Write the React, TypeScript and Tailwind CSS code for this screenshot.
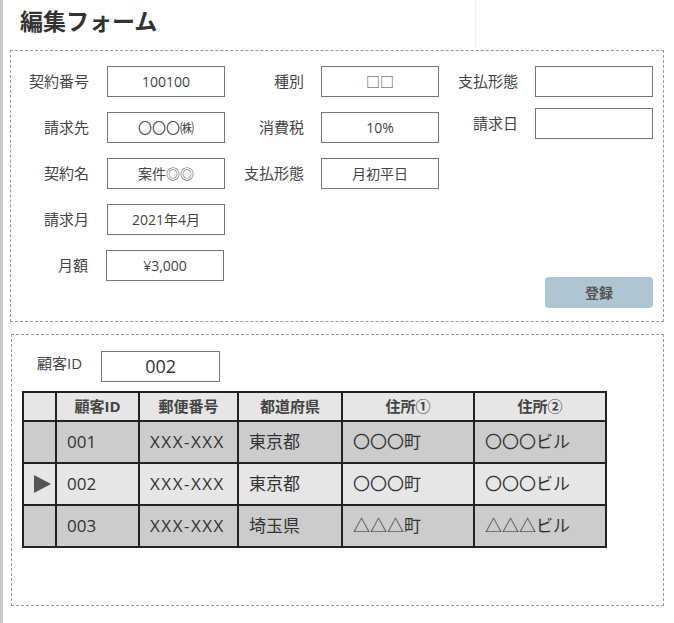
import React from "react";

const font = { fontFamily: '"Open Sans", "Noto Sans CJK JP", sans-serif' };

function Field({ label, value, labelW = "w-[79px]", gap = "ml-[17px]" }: { label: string; value: string; labelW?: string; gap?: string }) {
  return (
    <div className="flex items-center h-[31px]">
      <div className={`${labelW} text-right text-[15px] text-[#444] leading-none whitespace-nowrap`}>{label}</div>
      <div className={`${gap} w-[118px] h-[31px] border border-[#777] bg-white flex items-center justify-center text-[14px] text-[#444]`}>
        {value}
      </div>
    </div>
  );
}

const rows = [
  { id: "001", zip: "XXX-XXX", pref: "東京都", a1: "〇〇〇町", a2: "〇〇〇ビル", sel: false },
  { id: "002", zip: "XXX-XXX", pref: "東京都", a1: "〇〇〇町", a2: "〇〇〇ビル", sel: true },
  { id: "003", zip: "XXX-XXX", pref: "埼玉県", a1: "△△△町", a2: "△△△ビル", sel: false },
];

export default function App() {
  return (
    <div className="flex w-[674px] h-[623px] bg-white overflow-hidden" style={font}>
      <div className="w-[3px] bg-[#c8c8c8] shrink-0" />
      <div className="flex flex-col flex-1">
        <div className="flex h-[50px]">
          <div className="w-[473px] h-[47px] border-r border-[#f0f0f0] pl-[17px] pt-[4px]">
            <h1 className="text-[23px] font-bold text-[#333] leading-[34px]">編集フォーム</h1>
          </div>
        </div>
        <div className="ml-[7px] w-[654px] h-[272px] border border-dashed border-[#999] pt-[15px] pb-[13px] flex">
          <div className="flex flex-col gap-[15px] w-[214px]">
            <Field label="契約番号" value="100100" labelW="w-[78px]" gap="ml-[18px]" />
            <Field label="請求先" value="〇〇〇㈱" labelW="w-[78px]" gap="ml-[18px]" />
            <Field label="契約名" value="案件◎◎" labelW="w-[78px]" gap="ml-[18px]" />
            <Field label="請求月" value="2021年4月" labelW="w-[78px]" gap="ml-[18px]" />
            <Field label="月額" value="¥3,000" labelW="w-[77px]" gap="ml-[18px]" />
          </div>
          <div className="flex flex-col gap-[15px] w-[214px]">
            <Field label="種別" value="□□" />
            <Field label="消費税" value="10%" />
            <Field label="支払形態" value="月初平日" />
          </div>
          <div className="flex flex-col gap-[11px] w-[214px]">
            <Field label="支払形態" value="" />
            <Field label="請求日" value="" />
            <div className="mt-auto flex justify-end">
              <button className="w-[108px] h-[31px] rounded-[4px] bg-[#aec6d4] text-[14px] font-bold text-[#555]">登録</button>
            </div>
          </div>
        </div>
        <div className="ml-[8px] mt-[12px] w-[653px] h-[272px] border border-dashed border-[#999] pl-[10px] pt-[16px]">
          <div className="flex items-center h-[31px]">
            <div className="ml-[15px] text-[15px] text-[#444] -mt-[6px] whitespace-nowrap">顧客ID</div>
            <div className="ml-[19px] w-[119px] h-[31px] border border-[#777] flex items-center justify-center text-[18px] text-[#333]">002</div>
          </div>
          <table className="mt-[9px] border-collapse border-2 border-[#222] text-[#333]">
            <thead>
              <tr className="h-[29px] bg-[#e6e6e6] text-[15px] font-bold text-[#444]">
                <th className="w-[33px] border-2 border-[#222]"></th>
                <th className="w-[83px] border-2 border-[#222]">顧客ID</th>
                <th className="w-[99px] border-2 border-[#222]">郵便番号</th>
                <th className="w-[104px] border-2 border-[#222]">都道府県</th>
                <th className="w-[132px] border-2 border-[#222]">住所①</th>
                <th className="w-[132px] border-2 border-[#222]">住所②</th>
              </tr>
            </thead>
            <tbody>
              {rows.map((r) => (
                <tr key={r.id} className={`h-[42px] text-[17px] ${r.sel ? "bg-[#e6e6e6]" : "bg-[#cccccc]"}`}>
                  <td className="border-2 border-[#222] pl-[10px]">
                    {r.sel && (
                      <svg width="17" height="18" viewBox="0 0 17 18" className="block">
                        <polygon points="0,0 17,9 0,18" fill="#555" />
                      </svg>
                    )}
                  </td>
                  <td className="border-2 border-[#222] pl-[10px]">{r.id}</td>
                  <td className="border-2 border-[#222] pl-[10px] whitespace-nowrap tracking-[1.5px]">{r.zip}</td>
                  <td className="border-2 border-[#222] pl-[10px]">{r.pref}</td>
                  <td className="border-2 border-[#222] pl-[10px]">{r.a1}</td>
                  <td className="border-2 border-[#222] pl-[10px]">{r.a2}</td>
                </tr>
              ))}
            </tbody>
          </table>
        </div>
      </div>
    </div>
  );
}
